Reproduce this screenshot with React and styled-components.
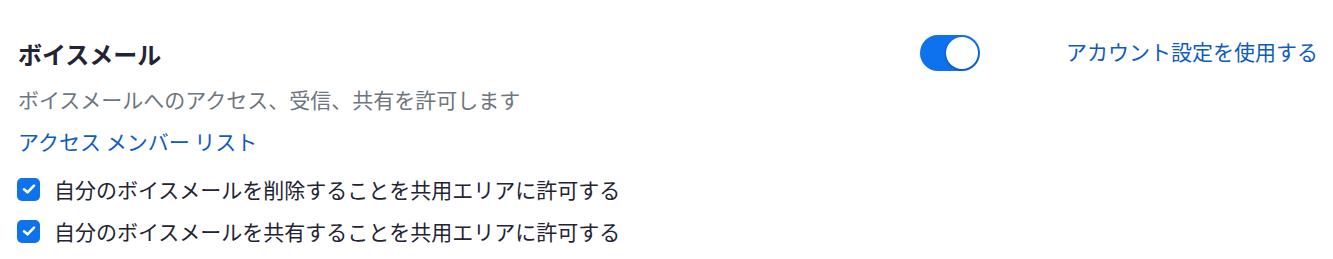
import React, { useState } from "react";
import styled, { createGlobalStyle } from "styled-components";

const GlobalStyle = createGlobalStyle`
  body {
    margin: 0;
    background: #fff;
    font-family: "Noto Sans CJK JP", "Noto Sans", sans-serif;
  }
`;

const Section = styled.div`
  display: flex;
  align-items: flex-start;
  padding: 34px 15px 0 18px;
`;

const Main = styled.div`
  flex: 1;
  display: flex;
  flex-direction: column;
`;

const Title = styled.h2`
  margin: 0;
  font-size: 24px;
  font-weight: 700;
  line-height: 40px;
  color: #232333;
`;

const Description = styled.p`
  margin: 10px 0 0;
  font-size: 21px;
  line-height: 30px;
  color: #6e7680;
`;

const Link = styled.a`
  color: #0e5cc2;
  font-size: 21px;
  line-height: 30px;
  text-decoration: none;
  cursor: pointer;
`;

const MemberLink = styled(Link)`
  margin-top: 12px;
`;

const Options = styled.div`
  display: flex;
  flex-direction: column;
  gap: 12px;
  margin-top: 18px;
`;

const Option = styled.label`
  display: flex;
  align-items: center;
  gap: 14px;
  margin-left: -1px;
  font-size: 21px;
  line-height: 30px;
  color: #232333;
  cursor: pointer;
`;

const Box = styled.span`
  width: 23px;
  height: 23px;
  border-radius: 5px;
  background: ${(p) => (p.checked ? "#0e72ed" : "#fff")};
  border: ${(p) => (p.checked ? "none" : "1px solid #babacc")};
  display: flex;
  align-items: center;
  justify-content: center;
  flex-shrink: 0;
`;

const Toggle = styled.button`
  width: 60px;
  height: 36px;
  border-radius: 18px;
  border: none;
  padding: 2px;
  margin-top: 1px;
  background: ${(p) => (p.on ? "#0e72ed" : "#babacc")};
  display: flex;
  justify-content: ${(p) => (p.on ? "flex-end" : "flex-start")};
  cursor: pointer;
`;

const Knob = styled.span`
  width: 32px;
  height: 32px;
  border-radius: 50%;
  background: #fff;
  box-shadow: 0 1px 3px rgba(0, 0, 0, 0.35);
`;

const AccountLink = styled(Link)`
  margin-left: 86px;
  line-height: 32px;
  margin-top: 1px;
`;

const Check = () => (
  <svg width="16" height="16" viewBox="0 0 16 16">
    <path
      d="M3 8.3 L6.5 11.3 L13 4.6"
      fill="none"
      stroke="#fff"
      strokeWidth="2.6"
      strokeLinecap="round"
      strokeLinejoin="round"
    />
  </svg>
);

const CheckOption = ({ label }) => {
  const [checked, setChecked] = useState(true);
  return (
    <Option onClick={() => setChecked(!checked)}>
      <Box checked={checked}>{checked && <Check />}</Box>
      {label}
    </Option>
  );
};

export default function App() {
  const [on, setOn] = useState(true);
  return (
    <>
      <GlobalStyle />
      <Section>
        <Main>
          <Title>ボイスメール</Title>
          <Description>ボイスメールへのアクセス、受信、共有を許可します</Description>
          <MemberLink>アクセス メンバー リスト</MemberLink>
          <Options>
            <CheckOption label="自分のボイスメールを削除することを共用エリアに許可する" />
            <CheckOption label="自分のボイスメールを共有することを共用エリアに許可する" />
          </Options>
        </Main>
        <Toggle on={on} onClick={() => setOn(!on)}>
          <Knob />
        </Toggle>
        <AccountLink>アカウント設定を使用する</AccountLink>
      </Section>
    </>
  );
}
